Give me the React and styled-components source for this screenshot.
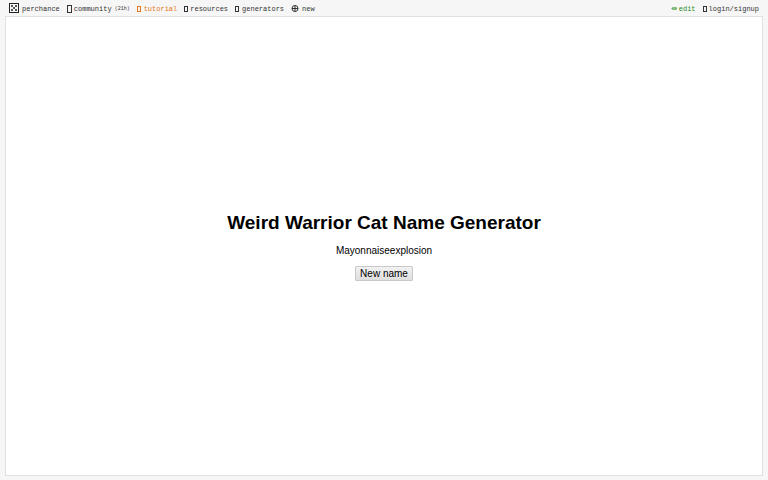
import React, { useState } from 'react';
import styled, { createGlobalStyle } from 'styled-components';

const GlobalStyle = createGlobalStyle`
    html,
    body {
        margin: 0;
        background: #f6f6f6;
    }
`;

const Page = styled.div`
    display: flex;
    flex-direction: column;
    min-height: 100vh;
    box-sizing: border-box;
    padding: 0 5px 4px;
    font-family: 'Liberation Sans', Arial, sans-serif;
    color: #000;
`;

const MenuBar = styled.nav`
    display: flex;
    align-items: center;
    justify-content: space-between;
    height: 16px;
    padding: 0 4px;
    font-family: 'Liberation Mono', 'Courier New', monospace;
    font-size: 7px;
    line-height: 8px;
`;

const MenuGroup = styled.div`
    display: flex;
    align-items: center;
    gap: 7px;
`;

const MenuLink = styled.a`
    display: flex;
    align-items: center;
    gap: ${props => props.$gap || 2}px;
    padding-top: 2px;
    color: ${props => props.$color || '#333'};
    text-decoration: none;
    white-space: nowrap;
`;

const Age = styled.span`
    margin-left: 1px;
    font-size: 5px;
`;

const Glyph = styled.span`
    box-sizing: border-box;
    width: ${props => (props.$wide ? 5 : 4)}px;
    height: ${props => (props.$wide ? 8 : 6)}px;
    border: 1px solid currentColor;
`;

const Frame = styled.main`
    display: flex;
    flex: 1;
    flex-direction: column;
    align-items: center;
    justify-content: center;
    border: 1px solid #e0e0e0;
    background: #fff;
`;

const Title = styled.h1`
    margin: 0;
    font-size: 19px;
    line-height: 22px;
    text-align: center;
`;

const Output = styled.p`
    margin: 11px 0 9px;
    font-size: 10px;
    line-height: 12px;
`;

const Button = styled.button`
    padding: 0 4px;
    border: 1px solid #c8c8c8;
    border-radius: 1px;
    background: linear-gradient(#f2f2f2, #dedede);
    color: #000;
    font-family: inherit;
    font-size: 10px;
    line-height: 13px;
`;

const DiceIcon = () => (
    <svg width="10" height="12" viewBox="0 0 10 12" aria-hidden="true">
        <rect x="0.5" y="0.5" width="9" height="9" fill="none" stroke="#222" />
        {[[3, 3], [7, 3], [5, 5], [3, 7], [7, 7]].map(([x, y]) => (
            <circle key={`${x}-${y}`} cx={x} cy={y} r="1" fill="#222" />
        ))}
    </svg>
);

const GlobeIcon = () => (
    <svg width="8" height="8" viewBox="0 0 8 8" fill="none" stroke="#222" strokeWidth="0.9" aria-hidden="true">
        <circle cx="4" cy="3.5" r="3" />
        <path d="M1 3.5h6M4 0.5v6" />
    </svg>
);

const PencilIcon = () => (
    <svg width="6" height="4" viewBox="0 0 6 4" aria-hidden="true">
        <path d="M0.2 1.5 1.6 0.3H5.2Q5.9 0.3 5.9 1.5T5.2 2.7H1.6Z" fill="#228b22" opacity="0.75" />
        <path d="M1.8 1.4H4.6" stroke="#d5ead5" strokeWidth="0.5" />
    </svg>
);

const App = () => {
    const names = ['Mayonnaiseexplosion', 'Spoonwhisker', 'Toasterfang', 'Picklestorm'];
    const [index, setIndex] = useState(0);

    return (
        <Page>
            <GlobalStyle />
            <MenuBar>
                <MenuGroup>
                    <MenuLink href="#home" $gap={3}>
                        <DiceIcon />
                        perchance
                    </MenuLink>
                    <MenuLink href="#community">
                        <Glyph $wide />
                        community
                        <Age>(21h)</Age>
                    </MenuLink>
                    <MenuLink href="#tutorial" $color="#e87722" $gap={3}>
                        <Glyph />
                        tutorial
                    </MenuLink>
                    <MenuLink href="#resources">
                        <Glyph />
                        resources
                    </MenuLink>
                    <MenuLink href="#generators" $gap={3}>
                        <Glyph />
                        generators
                    </MenuLink>
                    <MenuLink href="#new" $gap={3}>
                        <GlobeIcon />
                        new
                    </MenuLink>
                </MenuGroup>
                <MenuGroup>
                    <MenuLink href="#edit" $color="#228b22">
                        <PencilIcon />
                        edit
                    </MenuLink>
                    <MenuLink href="#login">
                        <Glyph />
                        login/signup
                    </MenuLink>
                </MenuGroup>
            </MenuBar>
            <Frame>
                <Title>Weird Warrior Cat Name Generator</Title>
                <Output>{names[index]}</Output>
                <Button type="button" onClick={() => setIndex((index + 1) % names.length)}>
                    New name
                </Button>
            </Frame>
        </Page>
    );
};

export default App;
